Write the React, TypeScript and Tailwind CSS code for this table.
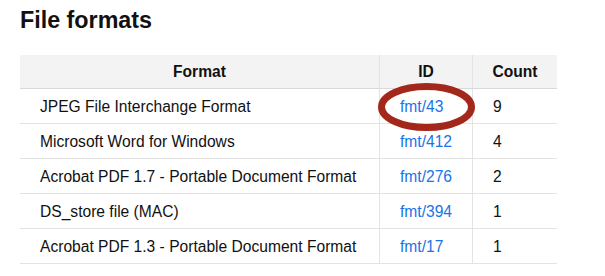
const rows = [
  { format: 'JPEG File Interchange Format', id: 'fmt/43', count: 9 },
  { format: 'Microsoft Word for Windows', id: 'fmt/412', count: 4 },
  { format: 'Acrobat PDF 1.7 - Portable Document Format', id: 'fmt/276', count: 2 },
  { format: 'DS_store file (MAC)', id: 'fmt/394', count: 1 },
  { format: 'Acrobat PDF 1.3 - Portable Document Format', id: 'fmt/17', count: 1 },
]

export default function App() {
  return (
    <div className="w-[605px] h-[276px] bg-white px-5 pt-[9px] text-[#111] font-['Liberation_Sans',Arial,sans-serif]">
      <h1 className="text-[23.3px] leading-none font-bold">File formats</h1>

      <div className="mt-[23px] w-[537px] text-[15.6px]">
        <div className="grid grid-cols-[359px_93px_85px] h-[34px] bg-[#f3f3f3] border-b border-[#d9d9d9] font-bold">
          <div className="flex items-center justify-center">Format</div>
          <div className="flex items-center justify-center border-l border-[#e3e3e3]">ID</div>
          <div className="flex items-center justify-center border-l border-[#e3e3e3]">Count</div>
        </div>

        {rows.map((r, i) => (
          <div key={r.id} className="grid grid-cols-[359px_93px_85px] h-[35px] border-b border-[#e3e3e3]">
            <div className="flex items-center pl-5">{r.format}</div>
            <div className="relative flex items-center pl-5 border-l border-[#e3e3e3]">
              <a href="#" className="text-[#1a73e8]">{r.id}</a>
              {i === 0 && (
                <svg className="absolute left-[-2px] top-[-6px] w-[97px] h-[48px] pointer-events-none" viewBox="0 0 97 48">
                  <ellipse cx="48.5" cy="24" rx="45" ry="20.5" fill="none" stroke="#a3281b" strokeWidth="7" />
                </svg>
              )}
            </div>
            <div className="flex items-center pl-5 border-l border-[#e3e3e3]">{r.count}</div>
          </div>
        ))}
      </div>
    </div>
  )
}
